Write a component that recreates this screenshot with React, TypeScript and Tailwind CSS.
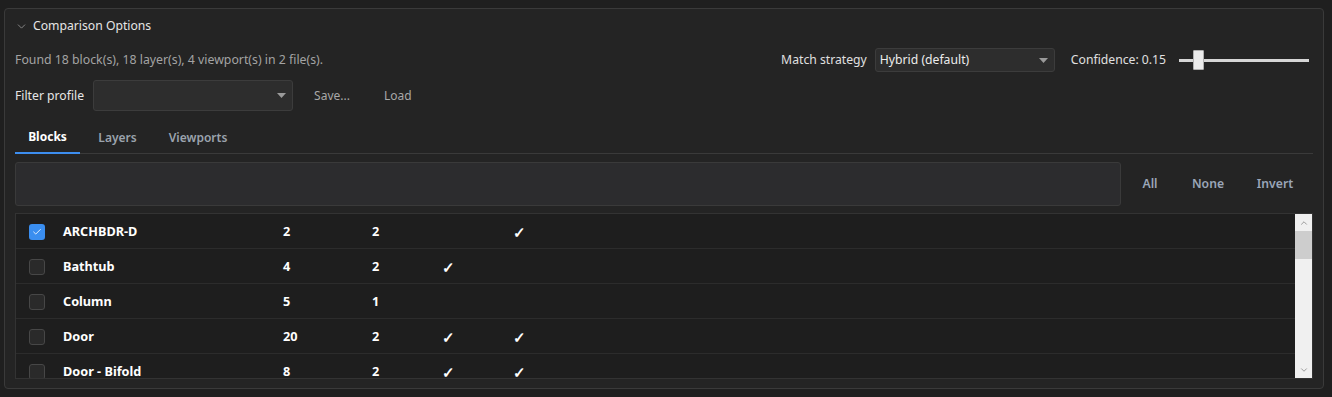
import { ChevronDown, ChevronUp, Check } from "lucide-react";

type BlockRow = {
  name: string;
  count: number;
  files: number;
  a: boolean;
  b: boolean;
  checked?: boolean;
};

const rows: BlockRow[] = [
  { name: "ARCHBDR-D", count: 2, files: 2, a: false, b: true, checked: true },
  { name: "Bathtub", count: 4, files: 2, a: true, b: false },
  { name: "Column", count: 5, files: 1, a: false, b: false },
  { name: "Door", count: 20, files: 2, a: true, b: true },
  { name: "Door - Bifold", count: 8, files: 2, a: true, b: true },
];

function Caret() {
  return (
    <svg width="9" height="5" viewBox="0 0 9 5" className="shrink-0">
      <path d="M0 0 L9 0 L4.5 5 Z" fill="#9a9a9a" />
    </svg>
  );
}

export default function App() {
  return (
    <div
      className="h-[397px] w-full bg-[#1f1f1f] pl-[4px] pr-[8px] pt-[8px] text-[#e0e0e0]"
      style={{ fontFamily: '"Noto Sans", "Open Sans", sans-serif' }}
    >
      <div className="flex h-[381px] flex-col rounded-[4px] border border-[#3a3a3a] bg-[#242424] px-[10px]">
        {/* header */}
        <div className="flex h-[33px] items-center gap-[5px] pt-[2px]">
          <ChevronDown size={13} strokeWidth={1.5} className="text-[#9a9a9a]" />
          <span className="text-[12.2px] text-[#e6e6e6]">Comparison Options</span>
        </div>

        {/* summary + strategy */}
        <div className="mt-[6px] flex h-[24px] items-center justify-between">
          <span className="pt-[1px] text-[12.3px] text-[#a3a3a3]">
            Found 18 block(s), 18 layer(s), 4 viewport(s) in 2 file(s).
          </span>
          <div className="flex items-center">
            <span className="mr-[8px] pt-[1px] text-[12.2px] text-[#e0e0e0]">Match strategy</span>
            <div className="flex h-[24px] w-[180px] items-center justify-between rounded-[3px] border border-[#3c3c3c] bg-[#2d2d2d] pl-[4px] pr-[6px]">
              <span className="pt-[1px] text-[12.2px] text-[#ececec]">Hybrid (default)</span>
              <Caret />
            </div>
            <span className="ml-[16px] pt-[1px] text-[12.2px] text-[#e0e0e0]">Confidence: 0.15</span>
            <div className="relative ml-[13px] mr-[4px] flex h-[24px] w-[130px] items-center">
              <div className="h-[3px] w-full bg-[#d6d6d6]" />
              <div className="absolute left-[14px] top-[2px] h-[20px] w-[11px] rounded-[1px] border border-[#b0b0b0] bg-[#ececec]" />
            </div>
          </div>
        </div>

        {/* filter profile */}
        <div className="mt-[8px] flex h-[31px] items-center">
          <span className="pt-[1px] text-[12.2px] text-[#e6e6e6]">Filter profile</span>
          <div className="ml-[9px] flex h-[31px] w-[200px] items-center justify-end rounded-[3px] border border-[#3c3c3c] bg-[#2d2d2d] pr-[6px]">
            <Caret />
          </div>
          <span className="ml-[21px] pt-[1px] text-[12px] text-[#a8a8a8]">Save...</span>
          <span className="ml-[34px] pt-[1px] text-[12px] text-[#a8a8a8]">Load</span>
        </div>

        {/* tabs */}
        <div className="mt-[10px] flex h-[33px] items-stretch border-b border-[#3a3a3a]">
          <div className="-mb-px flex w-[65px] items-center justify-center border-b-2 border-[#3d8ef0] pt-[1px] text-[12px] font-bold text-white">
            Blocks
          </div>
          <div className="flex w-[75px] items-center justify-center pt-[2px] text-[12px] font-semibold text-[#9ba3ad]">
            Layers
          </div>
          <div className="flex w-[86px] items-center justify-center pt-[2px] text-[12px] font-semibold text-[#9ba3ad]">
            Viewports
          </div>
        </div>

        {/* search */}
        <div className="mt-[8px] flex h-[44px] items-stretch">
          <div className="flex-1 rounded-[3px] border border-[#3a3a3a] bg-[#2c2c2e]" />
          <div className="flex w-[192px] items-center pt-[1px] text-[12.2px] font-semibold text-[#9aa6b8]">
            <span className="w-[58px] text-center">All</span>
            <span className="w-[58px] text-center">None</span>
            <span className="w-[76px] text-center">Invert</span>
          </div>
        </div>

        {/* list */}
        <div className="mt-[7px] flex h-[166px] border border-[#333333] bg-[#1e1e1e]">
          <div className="flex-1 overflow-hidden">
            {rows.map((row) => (
              <div
                key={row.name}
                className="flex h-[35px] shrink-0 items-center border-b border-[#2c2c2c] pt-[2px] text-[12.7px] font-bold text-white"
              >
                <div className="w-[47px] pl-[13px]">
                  {row.checked ? (
                    <div className="flex h-[16px] w-[16px] items-center justify-center rounded-[3px] bg-[#3a8ef0]">
                      <Check size={10} strokeWidth={2} className="text-white" />
                    </div>
                  ) : (
                    <div className="h-[16px] w-[16px] rounded-[3px] border border-[#474747] bg-[#2a2a2a]" />
                  )}
                </div>
                <div className="w-[220px]">{row.name}</div>
                <div className="w-[89px]">{row.count}</div>
                <div className="w-[70px]">{row.files}</div>
                <div className="w-[71px] text-[15px] leading-none">{row.a ? "✓" : ""}</div>
                <div className="w-[60px] text-[15px] leading-none">{row.b ? "✓" : ""}</div>
              </div>
            ))}
          </div>
          <div className="flex w-[17px] flex-col bg-[#f0f0f0]">
            <div className="flex h-[17px] items-center justify-center">
              <ChevronUp size={10} strokeWidth={2} className="text-[#8a8a8a]" />
            </div>
            <div className="h-[28px] bg-[#cdcdcd]" />
            <div className="flex-1" />
            <div className="flex h-[17px] items-center justify-center">
              <ChevronDown size={10} strokeWidth={2} className="text-[#8a8a8a]" />
            </div>
          </div>
        </div>
      </div>
    </div>
  );
}
